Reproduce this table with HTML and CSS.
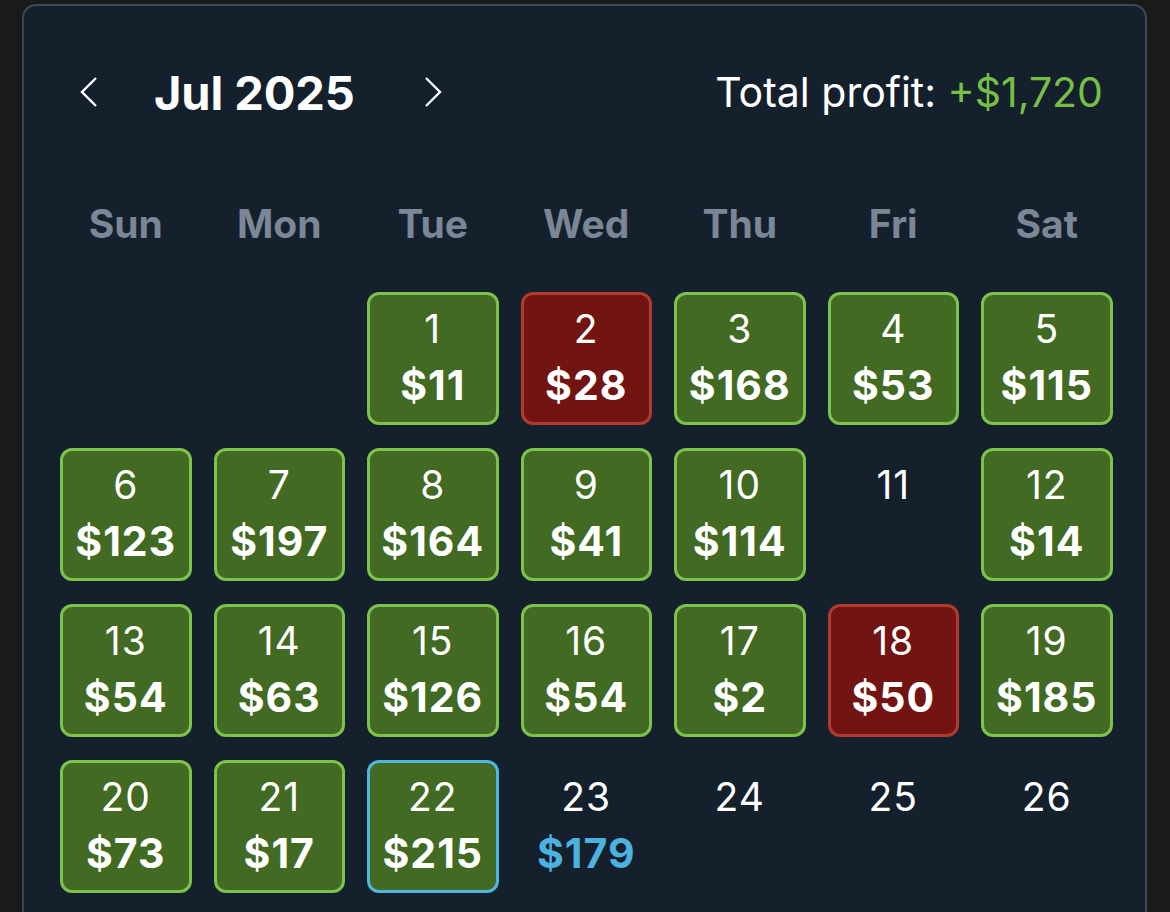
FILE: index.html
```html
<!DOCTYPE html>
<html>
<head>
<meta charset="utf-8">
<link rel="stylesheet" href="styles.css">
</head>
<body>
<div class="card">
  <div class="header">
    <div class="nav">
      <svg class="chev" width="18" height="30" viewBox="0 0 18 30"><polyline points="16,1 2,15 16,29" fill="none" stroke="#fff" stroke-width="2.4"/></svg>
      <span class="title">Jul 2025</span>
      <svg class="chev" width="18" height="30" viewBox="0 0 18 30"><polyline points="2,1 16,15 2,29" fill="none" stroke="#fff" stroke-width="2.4"/></svg>
    </div>
    <div class="total">Total profit: <span class="pos">+$1,720</span></div>
  </div>
  <div class="weekdays">
    <span>Sun</span><span>Mon</span><span>Tue</span><span>Wed</span><span>Thu</span><span>Fri</span><span>Sat</span>
  </div>
  <div class="grid">
    <div class="cell empty"></div>
    <div class="cell empty"></div>
    <div class="cell win"><span class="d">1</span><span class="a">$11</span></div>
    <div class="cell loss"><span class="d">2</span><span class="a">$28</span></div>
    <div class="cell win"><span class="d">3</span><span class="a">$168</span></div>
    <div class="cell win"><span class="d">4</span><span class="a">$53</span></div>
    <div class="cell win"><span class="d">5</span><span class="a">$115</span></div>

    <div class="cell win"><span class="d">6</span><span class="a">$123</span></div>
    <div class="cell win"><span class="d">7</span><span class="a">$197</span></div>
    <div class="cell win"><span class="d">8</span><span class="a">$164</span></div>
    <div class="cell win"><span class="d">9</span><span class="a">$41</span></div>
    <div class="cell win"><span class="d">10</span><span class="a">$114</span></div>
    <div class="cell plain"><span class="d">11</span></div>
    <div class="cell win"><span class="d">12</span><span class="a">$14</span></div>

    <div class="cell win"><span class="d">13</span><span class="a">$54</span></div>
    <div class="cell win"><span class="d">14</span><span class="a">$63</span></div>
    <div class="cell win"><span class="d">15</span><span class="a">$126</span></div>
    <div class="cell win"><span class="d">16</span><span class="a">$54</span></div>
    <div class="cell win"><span class="d">17</span><span class="a">$2</span></div>
    <div class="cell loss"><span class="d">18</span><span class="a">$50</span></div>
    <div class="cell win"><span class="d">19</span><span class="a">$185</span></div>

    <div class="cell win"><span class="d">20</span><span class="a">$73</span></div>
    <div class="cell win"><span class="d">21</span><span class="a">$17</span></div>
    <div class="cell win today"><span class="d">22</span><span class="a">$215</span></div>
    <div class="cell plain"><span class="d">23</span><span class="a blue">$179</span></div>
    <div class="cell plain"><span class="d">24</span></div>
    <div class="cell plain"><span class="d">25</span></div>
    <div class="cell plain"><span class="d">26</span></div>
  </div>
</div>
</body>
</html>
```
FILE: styles.css
```css
html, body {
  margin: 0;
  padding: 0;
  background: #1a1a1b;
  overflow: hidden;
}
body {
  padding: 4px 23px 0 22px;
  font-family: Inter, "Noto Sans", sans-serif;
  color: #fff;
}
.card {
  box-sizing: border-box;
  background: #15202d;
  border: 2px solid #3a4857;
  border-radius: 14px;
  min-height: 1000px;
  padding: 58px 34px 0 36px;
}
.header {
  height: 56px;
  display: flex;
  align-items: center;
  justify-content: space-between;
}
.nav {
  display: flex;
  align-items: center;
  padding-left: 20px;
}
.chev { display: block; }
.title {
  font-size: 47px;
  font-weight: 700;
  margin: 0 69px 0 56px;
  letter-spacing: -0.1px;
}
.total {
  font-size: 41px;
  font-weight: 400;
  padding-right: 8px;
}
.pos { color: #78bf45; }
.weekdays {
  margin-top: 78px;
  height: 50px;
  display: grid;
  grid-template-columns: repeat(7, 131.5px);
  column-gap: 22px;
  align-items: center;
  text-align: center;
  font-size: 39px;
  font-weight: 700;
  color: #7b8696;
}
.grid {
  margin-top: 44px;
  display: grid;
  grid-template-columns: repeat(7, 131.5px);
  grid-auto-rows: 133px;
  column-gap: 22px;
  row-gap: 23px;
}
.cell {
  box-sizing: border-box;
  border-radius: 12px;
  display: flex;
  flex-direction: column;
  align-items: center;
  padding-top: 11px;
  border: 3px solid transparent;
}
.win { background: #426a23; border-color: #7cc24b; }
.loss { background: #721411; border-color: #b2392c; }
.today { border-color: #4fb6dc; }
.d {
  font-size: 39px;
  font-weight: 400;
  line-height: 46px;
  letter-spacing: 1px;
}
.a {
  font-size: 41px;
  font-weight: 700;
  line-height: 46px;
  margin-top: 10px;
  letter-spacing: 1px;
}
.blue { color: #4cb2e0; }
```
